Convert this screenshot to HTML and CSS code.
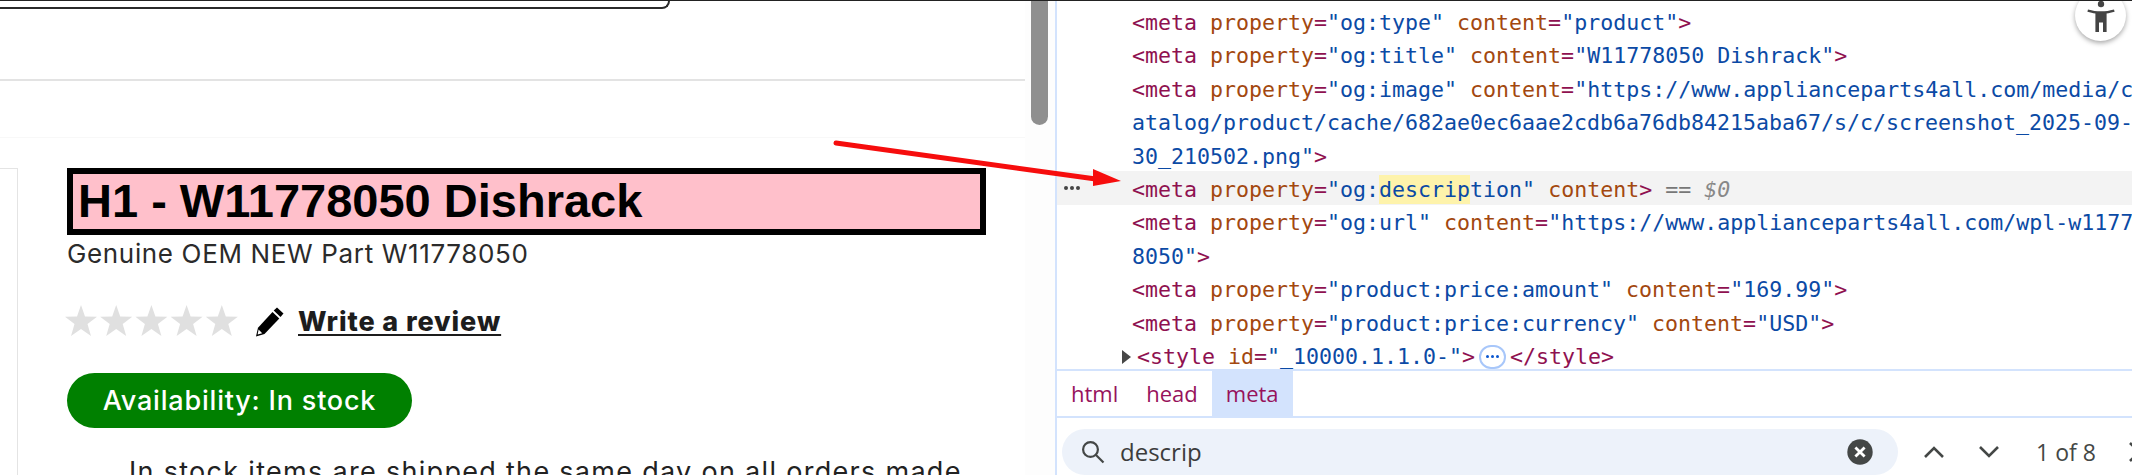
FILE: index.html
```html
<!DOCTYPE html>
<html lang="en">
<head>
<meta charset="utf-8">
<title>W11778050 Dishrack</title>
<link rel="stylesheet" href="styles.css">
</head>
<body>
<div class="screen">
  <section class="page">
    <div class="content">
      <header class="site-header"><div class="search-shape"></div></header>
      <div class="band"></div>
      <main class="product">
        <div class="gallery"></div>
        <div class="info">
          <h1 class="title">H1 - W11778050 Dishrack</h1>
          <p class="subtitle">Genuine OEM NEW Part W11778050</p>
          <div class="rating">
            <svg class="stars" width="173" height="32" viewBox="0 0 173 32" fill="#e0e0e0">
              <polygon points="16,0 20,11.5 32,11.7 22.5,19 26,31 16,24 6,31 9.5,19 0,11.7 12,11.5"/>
              <polygon transform="translate(35.2 0)" points="16,0 20,11.5 32,11.7 22.5,19 26,31 16,24 6,31 9.5,19 0,11.7 12,11.5"/>
              <polygon transform="translate(70.4 0)" points="16,0 20,11.5 32,11.7 22.5,19 26,31 16,24 6,31 9.5,19 0,11.7 12,11.5"/>
              <polygon transform="translate(105.6 0)" points="16,0 20,11.5 32,11.7 22.5,19 26,31 16,24 6,31 9.5,19 0,11.7 12,11.5"/>
              <polygon transform="translate(140.8 0)" points="16,0 20,11.5 32,11.7 22.5,19 26,31 16,24 6,31 9.5,19 0,11.7 12,11.5"/>
            </svg>
            <svg class="pencil" width="29" height="30" viewBox="0 0 29 30">
              <path d="M22 0.5l6.5 6-3 3.5-6.8-6.5z" fill="#000"/>
              <path d="M17.5 5l6.8 6.5L9.5 27 1 29.5l2-8.8z" fill="#000"/>
              <path d="M3.6 22.6l3.6 3.6-4.6 1.3z" fill="#fff"/>
            </svg>
            <a class="review" href="#">Write a review</a>
          </div>
          <div class="availability">Availability: In stock</div>
          <p class="shipping">In stock items are shipped the same day on all orders made</p>
        </div>
      </main>
    </div>
    <div class="scroll-track"><div class="scroll-thumb"></div></div>
  </section>

  <section class="devtools">
    <div class="tree">
      <div class="row"><span class="tag">&lt;meta</span> <span class="attr">property</span><span class="tag">=</span><span class="val">"og:type"</span> <span class="attr">content</span><span class="tag">=</span><span class="val">"product"</span><span class="tag">&gt;</span></div>
      <div class="row"><span class="tag">&lt;meta</span> <span class="attr">property</span><span class="tag">=</span><span class="val">"og:title"</span> <span class="attr">content</span><span class="tag">=</span><span class="val">"W11778050 Dishrack"</span><span class="tag">&gt;</span></div>
      <div class="row"><span class="tag">&lt;meta</span> <span class="attr">property</span><span class="tag">=</span><span class="val">"og:image"</span> <span class="attr">content</span><span class="tag">=</span><span class="val">"https://www.applianceparts4all.com/media/c</span></div>
      <div class="row"><span class="val">atalog/product/cache/682ae0ec6aae2cdb6a76db84215aba67/s/c/screenshot_2025-09-</span></div>
      <div class="row"><span class="val">30_210502.png"</span><span class="tag">&gt;</span></div>
      <div class="row selected"><span class="row-dots"><i></i><i></i><i></i></span><span class="tag">&lt;meta</span> <span class="attr">property</span><span class="tag">=</span><span class="val">"og:<mark class="hit">descrip</mark>tion"</span> <span class="attr">content</span><span class="tag">&gt;</span> <span class="eq">== <em>$0</em></span></div>
      <div class="row"><span class="tag">&lt;meta</span> <span class="attr">property</span><span class="tag">=</span><span class="val">"og:url"</span> <span class="attr">content</span><span class="tag">=</span><span class="val">"https://www.applianceparts4all.com/wpl-w1177</span></div>
      <div class="row"><span class="val">8050"</span><span class="tag">&gt;</span></div>
      <div class="row"><span class="tag">&lt;meta</span> <span class="attr">property</span><span class="tag">=</span><span class="val">"product:price:amount"</span> <span class="attr">content</span><span class="tag">=</span><span class="val">"169.99"</span><span class="tag">&gt;</span></div>
      <div class="row"><span class="tag">&lt;meta</span> <span class="attr">property</span><span class="tag">=</span><span class="val">"product:price:currency"</span> <span class="attr">content</span><span class="tag">=</span><span class="val">"USD"</span><span class="tag">&gt;</span></div>
      <div class="row style-row"><span class="caret"></span><span class="tag">&lt;style</span><span class="attr">id</span><span class="tag">=</span><span class="val">"_10000.1.1.0-"</span><span class="tag">&gt;</span><span class="more"><i></i><i></i><i></i></span><span class="tag">&lt;/style&gt;</span></div>
    </div>
    <nav class="crumbs">
      <span class="crumb">html</span>
      <span class="crumb">head</span>
      <span class="crumb current">meta</span>
    </nav>
    <div class="find">
      <div class="find-box">
        <svg class="find-icon" width="24" height="24" viewBox="0 0 24 24" fill="none" stroke="#444746" stroke-width="2.2">
          <circle cx="9.5" cy="9.5" r="7.4"/>
          <path d="M15 15l7.5 7.5"/>
        </svg>
        <span class="find-text">descrip</span>
        <svg class="find-clear" width="26" height="26" viewBox="0 0 26 26">
          <circle cx="13" cy="13" r="12.7" fill="#444746"/>
          <path d="M8.4 8.4l9.2 9.2M17.6 8.4l-9.2 9.2" stroke="#fff" stroke-width="2.8" fill="none"/>
        </svg>
      </div>
      <svg class="chev" width="20" height="12" viewBox="0 0 20 12" fill="none" stroke="#444746" stroke-width="2.6"><path d="M1 11l9-9 9 9"/></svg>
      <svg class="chev" width="20" height="12" viewBox="0 0 20 12" fill="none" stroke="#444746" stroke-width="2.6"><path d="M1 1l9 9 9-9"/></svg>
      <span class="count">1 of 8</span>
      <svg class="close" width="20" height="20" viewBox="0 0 20 20" fill="none" stroke="#444746" stroke-width="2.6"><path d="M1 1l18 18M19 1L1 19"/></svg>
    </div>
  </section>

  <div class="a11y">
    <svg width="28" height="32" viewBox="0 0 28 32" fill="#444">
      <circle cx="14" cy="3" r="3.2"/>
      <path d="M1 8.500c5 1.400 8 1.800 13 1.800s8-.4 13-1.800l.6 2.200c-3 .9-5.500 1.500-8 1.800V31h-3.600V21.500h-4V31H8.400V12.500c-2.500-.3-5-.9-8-1.800z"/>
    </svg>
  </div>

  <svg class="arrow" width="300" height="60" viewBox="0 0 300 60">
    <path d="M3 3L270 40" stroke="#f60d0d" stroke-width="5" stroke-linecap="round" fill="none"/>
    <polygon points="288,41 260,29 260,46" fill="#f60d0d"/>
  </svg>
</div>
</body>
</html>
```

FILE: styles.css
```css
* { box-sizing: border-box; }
html, body { margin: 0; padding: 0; background: #fff; }
.screen {
  position: relative;
  display: flex;
  width: 2132px;
  height: 475px;
  overflow: hidden;
  border-top: 1px solid #222;
}

/* left: page */
.page { display: flex; width: 1055px; height: 100%; }
.content { width: 1025px; overflow: hidden; font-family: Inter, "Noto Sans", sans-serif; color: #222; }
.site-header { height: 80px; border-bottom: 2px solid #e3e3e3; }
.search-shape {
  width: 670px;
  height: 8px;
  border: 2px solid #2a2a2a;
  border-top: 0;
  border-left: 0;
  border-bottom-right-radius: 26px;
}
.band { height: 57px; border-bottom: 1px solid #f8f8f8; }
.product { display: flex; margin-top: 30px; }
.gallery { width: 18px; height: 320px; border-top: 1px solid #e4e4e4; border-right: 1px solid #e4e4e4; }
.info { padding-left: 49px; width: 1007px; }
.title {
  width: 919px;
  height: 67px;
  margin: 0;
  padding: 0 0 0 5px;
  border: 6px solid #000;
  background: #ffc0cb;
  color: #000;
  font: 700 47px/54px "Liberation Sans", Arial, sans-serif;
}
.subtitle { margin: 3px 0 0; font-size: 26px; letter-spacing: .65px; line-height: 32px; font-weight: 400; color: #2b2b2b; }
.rating { display: flex; align-items: flex-start; margin: 35px 0 0 -2px; height: 33px; }
.stars { display: block; flex: none; }
.pencil { flex: none; margin: 2px 0 0 17px; }
.review {
  margin: 0 0 0 14px;
  font-size: 27px;
  letter-spacing: .9px;
  line-height: 34px;
  font-weight: 800;
  color: #1d1d1d;
  text-decoration: underline;
  text-decoration-thickness: 2px;
  text-underline-offset: 3px;
}
.availability {
  width: 345px;
  height: 55px;
  margin-top: 35px;
  border-radius: 28px;
  background: #008000;
  color: #fff;
  font-size: 27px;
  letter-spacing: .8px;
  font-weight: 500;
  line-height: 55px;
  text-align: center;
}
.shipping { margin: 26px 0 0 62px; font-size: 27px; letter-spacing: 1.3px; line-height: 36px; color: #222; white-space: nowrap; }

.scroll-track { position: relative; width: 30px; background: #fdfdfd; }
.scroll-thumb { width: 17px; height: 124px; margin-left: 6px; background: #8f8f8f; border-radius: 0 0 9px 9px; }

/* right: devtools */
.devtools { flex: 1; min-width: 0; border-left: 2px solid #d3e3fd; display: flex; flex-direction: column; background: #fff; }
.tree { height: 369px; padding-top: 3.5px; overflow: hidden; font: 21.6px/33.4px "DejaVu Sans Mono", monospace; }
.row { height: 33.4px; padding: 1.5px 0 0 75px; position: relative; white-space: nowrap; }
.selected { background: #f3f3f3; }
.tag { color: #8f1150; }
.attr { color: #a3480f; }
.val { color: #0b4aa5; }
.hit { background: #fef3ab; color: inherit; padding: 2px 0; }
.eq { color: #777; font-style: italic; }
.eq em { font-style: italic; color: #888; }
.row-dots { position: absolute; left: 7px; top: 15px; display: flex; gap: 2px; }
.row-dots i { width: 4px; height: 4px; border-radius: 50%; background: #444; }
.style-row { padding: 3px 0 0 65px; display: flex; align-items: center; }
.style-row .attr { margin-left: 13px; }
.caret { width: 0; height: 0; margin-right: 6px; border-left: 9px solid #474747; border-top: 7px solid transparent; border-bottom: 7px solid transparent; }
.more {
  display: flex; align-items: center; justify-content: center; gap: 2px;
  width: 27px; height: 24px; margin: 0 4px;
  border: 2px solid #a8c7fa; border-radius: 12px; background: #fff;
}
.more i { width: 3px; height: 3px; border-radius: 50%; background: #0b57d0; }
.crumbs {
  display: flex;
  height: 49px;
  border-top: 2px solid #d3e3fd;
  border-bottom: 2px solid #d3e3fd;
  font: 400 22px/45px "Open Sans", "Noto Sans", sans-serif;
  color: #97125c;
}
.crumb { padding: 0 14px; }
.current { background: #d3e3fd; }
.find { display: flex; align-items: center; padding: 10px 0 0 5px; height: 57px; font-family: "Open Sans", "Noto Sans", sans-serif; color: #444746; }
.find-box { display: flex; align-items: center; flex: none; width: 836px; height: 46px; padding: 0 25px 0 19px; border-radius: 23px; background: #edf2fa; }
.find-icon { flex: none; }
.find-text { flex: 1; margin-left: 15px; font-size: 24px; line-height: 32px; color: #3c3c3c; }
.chev { flex: none; margin-left: 26px; }
.chev + .chev { margin-left: 35px; }
.count { flex: none; margin-left: 37px; font-size: 23px; line-height: 32px; }
.close { flex: none; margin-left: 33px; }

.a11y {
  position: absolute;
  left: 2075px;
  top: -11px;
  width: 51px;
  height: 51px;
  display: flex;
  align-items: flex-start;
  justify-content: center;
  padding-top: 11px;
  border-radius: 50%;
  background: #fff;
  box-shadow: 0 2px 5px rgba(0,0,0,.35);
}
.arrow { position: absolute; left: 833px; top: 139px; overflow: visible; }
```
